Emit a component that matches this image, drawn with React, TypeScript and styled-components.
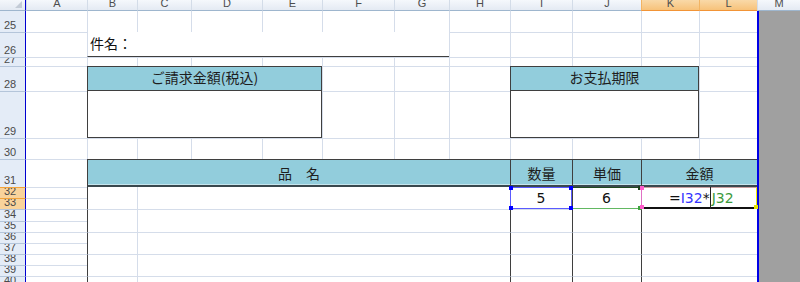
import { FC } from 'react';
import styled, { createGlobalStyle, css } from 'styled-components';

const GRID = '#D5DDEA';
const DARK = '#3F3F3F';
const AQUA = '#92CDDC';

const COLS = ['A', 'B', 'C', 'D', 'E', 'F', 'G', 'H', 'I', 'J', 'K', 'L', 'M'];
const COL_WIDTHS = [61, 50, 54, 71, 60, 72, 55, 61, 62, 69, 58, 58, 43];
const ROWS = [25, 26, 27, 28, 29, 30, 31, 32, 33, 34, 35, 36, 37, 38, 39, 40];
const ROW_HEIGHTS: Record<number, number> = {
  25: 21, 26: 25, 27: 9, 28: 25, 29: 47, 30: 21, 31: 28,
  32: 11, 33: 11, 34: 12, 35: 11, 36: 11, 37: 11, 38: 11, 39: 11, 40: 11,
};
const ACTIVE_COLS = ['K', 'L'];
const ACTIVE_ROWS = [32, 33];

// grid row for a sheet row number (row 1 of the grid is the column header)
const gr = (r: number) => r - 23;

const GlobalStyle = createGlobalStyle`
  html, body {
    margin: 0;
    padding: 0;
    background: #ffffff;
    overflow: hidden;
  }
  body {
    font-family: "Noto Sans CJK JP", sans-serif;
  }
`;

interface PlaceProps {
  $r: string;
  $c: string;
}

const place = css<PlaceProps>`
  grid-row: ${(p) => p.$r};
  grid-column: ${(p) => p.$c};
`;

const Sheet = styled.div`
  display: grid;
  width: 800px;
  grid-template-columns: 26px ${COL_WIDTHS.map((w) => `${w}px`).join(' ')};
  grid-template-rows: 11px ${ROWS.map((r) => `${ROW_HEIGHTS[r]}px`).join(' ')};
  & > * {
    box-sizing: border-box;
    min-width: 0;
    min-height: 0;
  }
`;

const Corner = styled.div`
  grid-row: 1;
  grid-column: 1;
  display: flex;
  align-items: flex-end;
  justify-content: flex-end;
  padding: 0 3px 2px 0;
  background: linear-gradient(#f4f7fb, #e3e9f2);
  border-right: 1px solid #0000d0;
  border-bottom: 1px solid #9eb6ce;
`;

const CornerMark = styled.span`
  width: 0;
  height: 0;
  border-left: 7px solid transparent;
  border-bottom: 7px solid #c3cbd6;
`;

const ColHeader = styled.div<PlaceProps & { $active?: boolean }>`
  ${place};
  display: flex;
  align-items: flex-end;
  justify-content: center;
  overflow: hidden;
  font-family: "Liberation Sans", Arial, sans-serif;
  font-size: 11px;
  line-height: 1;
  padding-bottom: 1px;
  color: #4d4d4d;
  border-left: 1px solid ${(p) => (p.$active ? '#f2b463' : '#d3dce8')};
  border-bottom: 1px solid ${(p) => (p.$active ? '#f29436' : '#9eb6ce')};
  background: ${(p) =>
    p.$active
      ? 'linear-gradient(#f9d9a8, #f7c27a)'
      : 'linear-gradient(#f5f8fc, #e4eaf3)'};
`;

const RowHeader = styled.div<PlaceProps & { $active?: boolean; $first?: boolean }>`
  ${place};
  display: flex;
  align-items: flex-end;
  overflow: hidden;
  padding: 0 0 1px 4px;
  font-family: "Liberation Sans", Arial, sans-serif;
  font-size: 11px;
  line-height: 1;
  color: #4a4a4a;
  border-right: 1px solid #0000d0;
  border-top: ${(p) =>
    p.$first ? 'none' : `1px solid ${p.$active ? '#f2a33a' : '#b4c5da'}`};
  background: ${(p) => (p.$active ? '#f9d39b' : '#e4ecf7')};
`;

const GridCell = styled.div<PlaceProps & { $noTop?: boolean; $noLeft?: boolean }>`
  ${place};
  border-top: ${(p) => (p.$noTop ? 'none' : `1px solid ${GRID}`)};
  border-left: ${(p) => (p.$noLeft ? 'none' : `1px solid ${GRID}`)};
`;

const OutsideArea = styled.div`
  grid-row: 2 / -1;
  grid-column: 14;
  background: #a0a0a0;
  box-shadow: inset 2px 0 0 #0000e6;
`;

const TitleCell = styled.div<PlaceProps>`
  ${place};
  display: flex;
  align-items: center;
  padding: 0 0 2px 2px;
  background: #ffffff;
  border-left: 1px solid ${GRID};
  border-bottom: 1px solid ${DARK};
  font-size: 14px;
  color: #111;
`;

const BoxHead = styled.div<PlaceProps>`
  ${place};
  display: flex;
  align-items: center;
  justify-content: center;
  padding-bottom: 3px;
  background: ${AQUA};
  border: 1px solid ${DARK};
  font-size: 14px;
  color: #1e1e1e;
`;

const BoxBody = styled.div<PlaceProps>`
  ${place};
  background: #ffffff;
  border: 1px solid ${DARK};
  border-top: none;
`;

const TableHead = styled.div<PlaceProps>`
  ${place};
  display: flex;
  align-items: center;
  justify-content: center;
  background: ${AQUA};
  border-top: 1px solid ${DARK};
  border-left: 1px solid ${DARK};
  border-bottom: 2px solid #3a484e;
  box-shadow: inset 0 -1px 0 #c6e6ee;
  font-size: 14px;
  color: #1e1e1e;
`;

const BodyCell = styled.div<PlaceProps & { $edge: 'dark' | 'light'; $line?: boolean }>`
  ${place};
  background: #ffffff;
  border-left: 1px solid ${(p) => (p.$edge === 'dark' ? DARK : GRID)};
  border-top: ${(p) => (p.$line ? `1px solid ${GRID}` : 'none')};
`;

const REF_TONES = {
  blue: { top: '#5a5aff', bottom: '#5a5aff', side: '#5a5aff' },
  green: { top: '#214a21', bottom: '#62b862', side: 'transparent' },
};

const RefCell = styled.div<PlaceProps & { $tone: 'blue' | 'green' }>`
  ${place};
  position: relative;
  display: flex;
  align-items: center;
  justify-content: center;
  background: #ffffff;
  border-left: 1px solid ${(p) => (p.$tone === 'blue' ? REF_TONES.blue.side : DARK)};
  border-right: 1px solid ${(p) => REF_TONES[p.$tone].side};
  border-top: 1px solid ${(p) => REF_TONES[p.$tone].top};
  border-bottom: 1px solid ${(p) => REF_TONES[p.$tone].bottom};
  font-family: "DejaVu Sans", sans-serif;
  font-size: 14px;
  color: #111;
`;

const EditCell = styled.div<PlaceProps>`
  ${place};
  position: relative;
  display: flex;
  align-items: stretch;
  padding-left: 27px;
  background: #ffffff;
  border-left: 1px solid #e070c4;
  border-top: 1px solid #c9a0a0;
  border-bottom: 2px solid #111;
  border-right: 1px solid #f2f200;
  font-family: "DejaVu Sans", sans-serif;
  font-size: 14px;
  color: #111;
`;

const Token = styled.span<{ $tone?: 'blue' | 'green' }>`
  align-self: center;
  color: ${(p) => (p.$tone === 'blue' ? '#3434ff' : p.$tone === 'green' ? '#3c9a3c' : '#111')};
`;

const Caret = styled.span`
  width: 1px;
  margin: -1px 1px -2px 0;
  background: #222;
`;

const Handle = styled.span<{ $v: 'top' | 'bottom'; $h: 'left' | 'right'; $color: string }>`
  position: absolute;
  width: 4px;
  height: 4px;
  background: ${(p) => p.$color};
  ${(p) => p.$v}: -2px;
  ${(p) => p.$h}: -2px;
`;

const BODY_PAIRS: [number, number][] = [
  [32, 34],
  [34, 36],
  [36, 38],
  [38, 40],
  [40, 41],
];

const App: FC = () => {
  return (
    <>
      <GlobalStyle />
      <Sheet>
        <Corner>
          <CornerMark />
        </Corner>

        {COLS.map((c, i) => (
          <ColHeader key={c} $r="1" $c={`${i + 2}`} $active={ACTIVE_COLS.includes(c)}>
            {c}
          </ColHeader>
        ))}

        {ROWS.map((r) => (
          <RowHeader
            key={r}
            $r={`${gr(r)}`}
            $c="1"
            $first={r === 25}
            $active={ACTIVE_ROWS.includes(r)}
          >
            {r}
          </RowHeader>
        ))}

        {ROWS.map((r) =>
          COLS.slice(0, 12).map((c, i) => (
            <GridCell
              key={`${c}${r}`}
              $r={`${gr(r)}`}
              $c={`${i + 2}`}
              $noTop={r === 25}
              $noLeft={i === 0}
            />
          )),
        )}

        <OutsideArea />

        <TitleCell $r={`${gr(26)}`} $c="3 / 9">件名：</TitleCell>

        <BoxHead $r={`${gr(28)}`} $c="3 / 7">ご請求金額(税込)</BoxHead>
        <BoxBody $r={`${gr(29)}`} $c="3 / 7" />
        <BoxHead $r={`${gr(28)}`} $c="10 / 13">お支払期限</BoxHead>
        <BoxBody $r={`${gr(29)}`} $c="10 / 13" />

        <TableHead $r={`${gr(31)}`} $c="3 / 10">品　名</TableHead>
        <TableHead $r={`${gr(31)}`} $c="10 / 11">数量</TableHead>
        <TableHead $r={`${gr(31)}`} $c="11 / 12">単価</TableHead>
        <TableHead $r={`${gr(31)}`} $c="12 / 14">金額</TableHead>

        {BODY_PAIRS.map(([from, to], idx) => {
          const rows = `${gr(from)} / ${gr(to)}`;
          const line = idx > 0;
          return [
            <BodyCell key={`b${from}`} $r={rows} $c="3 / 4" $edge="dark" $line={line} />,
            <BodyCell key={`c${from}`} $r={rows} $c="4 / 10" $edge="light" $line={line} />,
            idx === 0 ? null : (
              <BodyCell key={`i${from}`} $r={rows} $c="10 / 11" $edge="dark" $line={line} />
            ),
            idx === 0 ? null : (
              <BodyCell key={`j${from}`} $r={rows} $c="11 / 12" $edge="dark" $line={idx > 1} />
            ),
            idx === 0 ? null : (
              <BodyCell key={`k${from}`} $r={rows} $c="12 / 14" $edge="dark" $line={idx > 1} />
            ),
          ];
        })}

        <RefCell $r={`${gr(32)} / ${gr(34)}`} $c="11 / 12" $tone="green">
          6
          <Handle $v="top" $h="right" $color="#1d3f1d" />
          <Handle $v="bottom" $h="right" $color="#3fa33f" />
        </RefCell>

        <RefCell $r={`${gr(32)} / ${gr(34)}`} $c="10 / 11" $tone="blue">
          5
          <Handle $v="top" $h="left" $color="#0000ff" />
          <Handle $v="top" $h="right" $color="#0000ff" />
          <Handle $v="bottom" $h="left" $color="#0000ff" />
          <Handle $v="bottom" $h="right" $color="#0000ff" />
        </RefCell>

        <EditCell $r={`${gr(32)} / ${gr(34)}`} $c="12 / 14">
          <Token>=</Token>
          <Token $tone="blue">I32</Token>
          <Token>*</Token>
          <Caret />
          <Token $tone="green">J32</Token>
          <Handle $v="top" $h="left" $color="#ff5ccc" />
          <Handle $v="bottom" $h="left" $color="#ff5ccc" />
          <Handle $v="bottom" $h="right" $color="#e6e600" />
        </EditCell>
      </Sheet>
    </>
  );
};

export default App;
